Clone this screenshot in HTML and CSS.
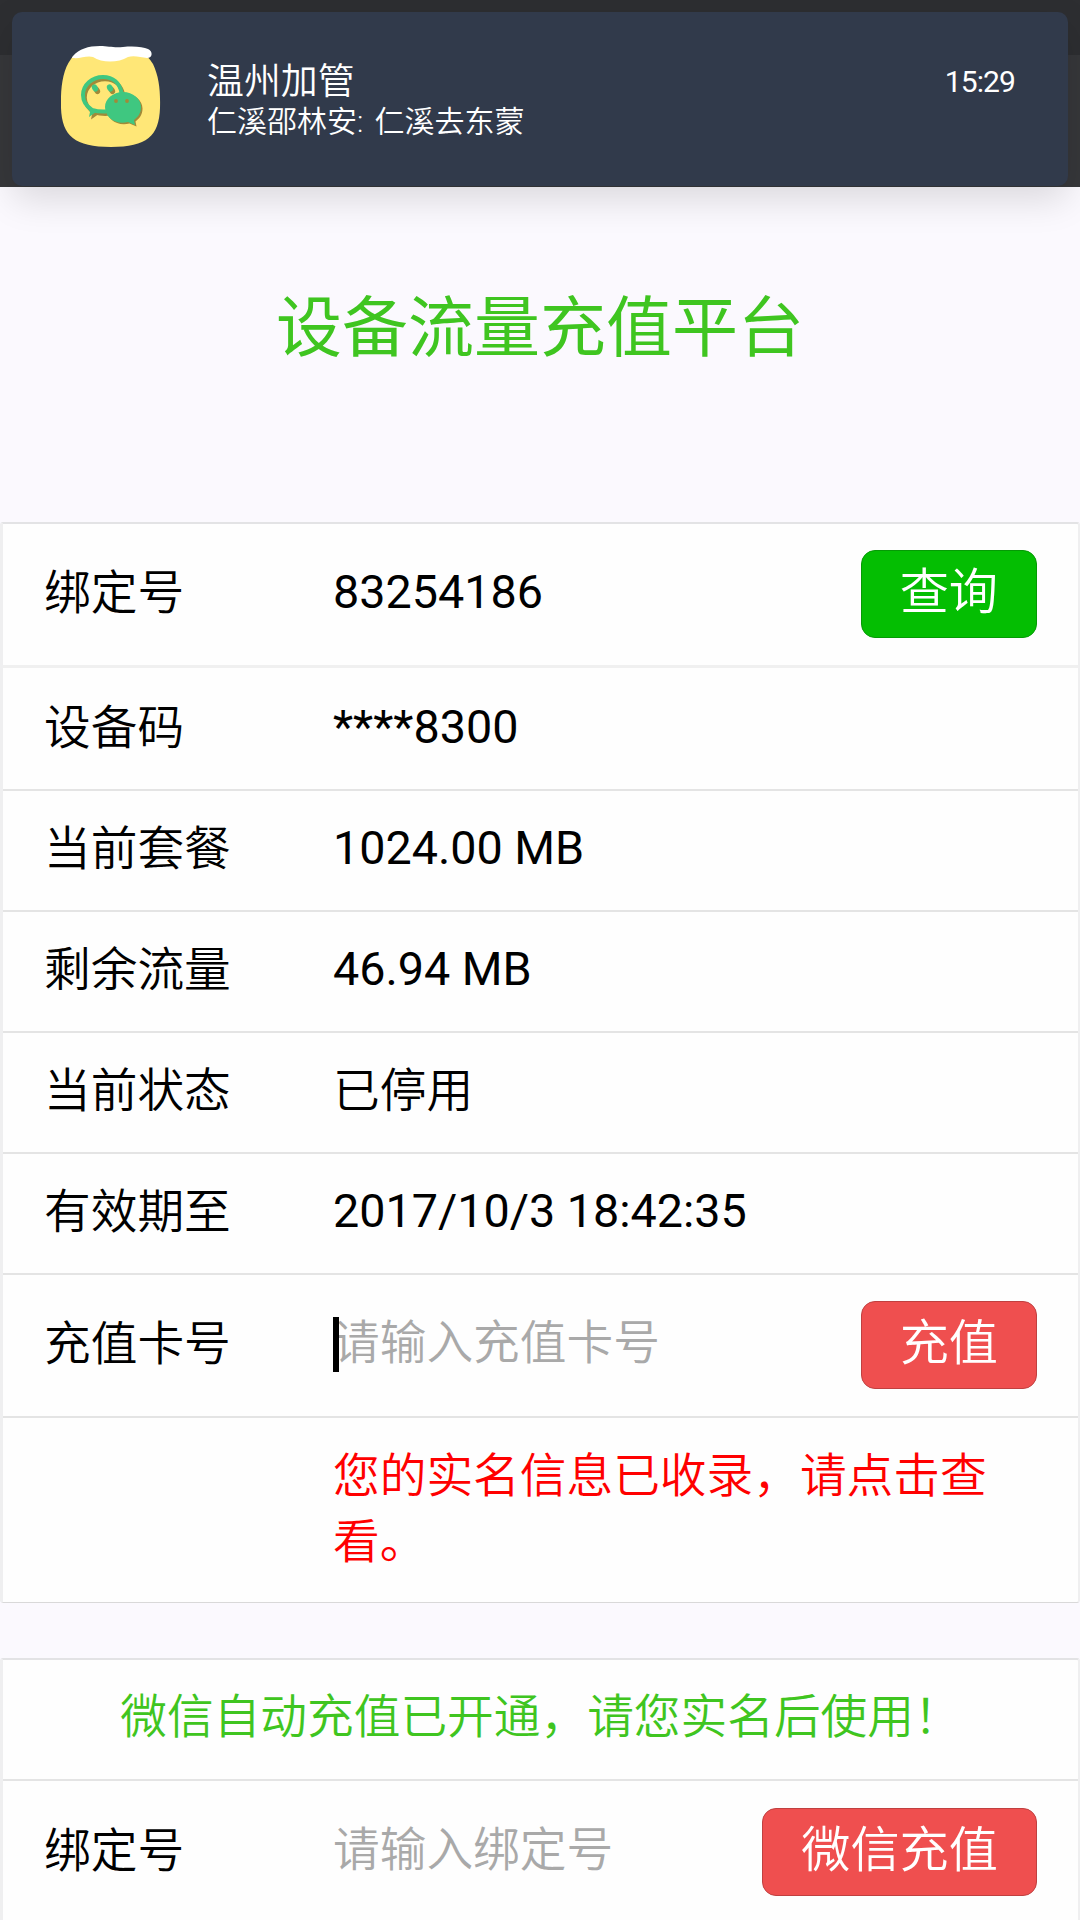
FILE: index.html
```html
<!DOCTYPE html>

<html lang="zh-CN">
<head>
    <meta charset="UTF-8">
    <meta name="viewport" content="width=device-width, initial-scale=1.0">
    <title>设备流量充值平台</title>
    <link rel="stylesheet" href="styles.css">
</head>
<body>
    <div class="topbar">
        <div class="statusbar"></div>
        <div class="notification">
            <svg class="app-icon" viewBox="0 0 100 102">
                <path fill="#ffe777" d="M50 4C80 4 86 8 92 18C98 31 99.500 44 99 62C98 90 86 101 50 101C14 101 1 90 0 62C-.500 44 1 25 10 13C14 7 22 4 50 4Z"/>
                <path fill="#fff" d="M12 10C18 3 27 0 39 0C48 0 52 2 62 1C74 0 82 1 87 3C92 5 92 12 86 12C80 11 72 9 67 11C57 17 41 17 32 11C26 9 19 13 12 12Q10 12 12 10Z"/>
                <g transform="translate(2 2.500)" fill="#a18a38">
                    <path fill="none" stroke="#a18a38" stroke-width="3.600" d="M45 65.500Q38 66 31 64C25 60 22 55 22 49C22 39 31 31 42 31C52 31 59 37 60.500 47"/>
                    <path d="M27 62L35 66L28 71L29 66Z"/>
                    <ellipse cx="34" cy="42" rx="2.800" ry="3.800" transform="rotate(-30 34 42)"/>
                    <ellipse cx="49" cy="42" rx="2.800" ry="3.800" transform="rotate(-30 49 42)"/>
                </g>
                <path transform="translate(1.500 1.500)" fill="#a18a38" d="M62 46C72 46 80 53 80 61C80 67 77 71 73 74L74 79L67 76C55 79 44 72 44 61C44 53 52 46 62 46Z"/>
                <g fill="#3fc780">
                    <path fill="none" stroke="#3fc780" stroke-width="4" d="M45 65.500Q38 66 31 64C25 60 22 55 22 49C22 39 31 31 42 31C52 31 59 37 60.500 47"/>
                    <path d="M27 62L35 66L28 71L29 66Z"/>
                    <ellipse cx="34" cy="42" rx="2.800" ry="3.800" transform="rotate(-30 34 42)"/>
                    <ellipse cx="49" cy="42" rx="2.800" ry="3.800" transform="rotate(-30 49 42)"/>
                    <path d="M62 46C72 46 80 53 80 61C80 67 77 71 73 74L74 79L67 76C55 79 44 72 44 61C44 53 52 46 62 46Z"/>
                </g>
                <circle cx="55" cy="55" r="1.900" fill="#a18a38"/>
                <circle cx="66" cy="55" r="1.900" fill="#a18a38"/>
            </svg>
            <div class="message">
                <div class="message-title">温州加管</div>
                <div class="message-text">仁溪邵林安: 仁溪去东蒙</div>
            </div>
            <div class="message-time">15:29</div>
        </div>
    </div>

    <h1 class="title">设备流量充值平台</h1>

    <div class="cells">
        <div class="cell tall first">
            <label class="label">绑定号</label>
            <input class="value" type="text" value="83254186">
            <button class="btn btn-green">查询</button>
        </div>
        <div class="cell code">
            <div class="label">设备码</div>
            <div class="value">****8300</div>
        </div>
        <div class="cell">
            <div class="label">当前套餐</div>
            <div class="value">1024.00 MB</div>
        </div>
        <div class="cell">
            <div class="label">剩余流量</div>
            <div class="value">46.94 MB</div>
        </div>
        <div class="cell">
            <div class="label">当前状态</div>
            <div class="value cn">已停用</div>
        </div>
        <div class="cell">
            <div class="label">有效期至</div>
            <div class="value">2017/10/3 18:42:35</div>
        </div>
        <div class="cell tall focus">
            <label class="label">充值卡号</label>
            <input class="value" type="text" placeholder="请输入充值卡号">
            <button class="btn btn-red">充值</button>
        </div>
        <div class="cell notice">
            <div class="label"></div>
            <div class="value cn warn">您的实名信息已收录，请点击查看。</div>
        </div>
    </div>

    <div class="cells">
        <div class="cell center">微信自动充值已开通，请您实名后使用！</div>
        <div class="cell tall">
            <label class="label">绑定号</label>
            <input class="value" type="text" placeholder="请输入绑定号">
            <button class="btn btn-red">微信充值</button>
        </div>
    </div>
</body>
</html>
```
FILE: styles.css
```css
* {
    box-sizing: border-box;
}
body {
    margin: 0;
    padding: 0;
    height: 1920px;
    overflow: hidden;
    background-color: #fbf9fe;
    font-family: Roboto, "Noto Sans CJK SC", sans-serif;
    font-size: 46.7px;
    line-height: 66px;
    color: #000;
}
.topbar {
    position: relative;
    height: 187px;
    padding: 12px 12px 0;
    background-color: #36373a;
}
.statusbar {
    position: absolute;
    top: 0;
    left: 0;
    width: 100%;
    height: 55px;
    background-color: #2d2e31;
}
.notification {
    position: relative;
    display: flex;
    height: 174px;
    padding: 34px 53px 0 49px;
    background-color: #313a4b;
    border-radius: 10px;
    box-shadow: 0 14px 36px rgba(0,0,0,0.13);
    color: #fff;
    font-weight: 350;
}
.app-icon {
    width: 100px;
    height: 102px;
}
.message {
    flex: 1;
    margin-left: 46px;
    padding-top: 15px;
}
.message-title {
    font-size: 36.9px;
    line-height: 42px;
}
.message-text {
    font-size: 30px;
    line-height: 38px;
    word-spacing: 4px;
}
.message-time {
    margin-top: 16px;
    font-size: 30px;
    font-weight: 400;
    line-height: 40px;
    letter-spacing: -0.9px;
}
.title {
    margin: 0;
    padding: 102px 0 154px;
    font-size: 66px;
    line-height: 79px;
    font-weight: 400;
    text-align: center;
    color: #3fc520;
}
.cells {
    margin-bottom: 55px;
    background-color: #fefefe;
    border-top: 2px solid #e3e3e5;
    border-bottom: 1px solid #d9d9d9;
    border-left: 3px solid #efeff0;
    border-right: 2px solid #efeff0;
    border-radius: 3px;
}
.cell {
    display: flex;
    align-items: center;
    height: 121px;
    padding: 0 41px 6px;
    border-bottom: 2px solid #e4e4e4;
}
.cell:last-child {
    border-bottom: none;
}
.tall {
    height: 143px;
}
.first {
    height: 144px;
    border-bottom: 3px solid #f0f0f0;
}
.code {
    height: 123px;
    padding-bottom: 4px;
}
.label {
    flex: none;
    width: 289px;
    margin-top: 2px;
    font-weight: 350;
}
.value {
    flex: 1;
    min-width: 0;
}
.cn {
    margin-top: 2px;
    font-weight: 350;
}
.warn {
    margin-top: 0;
    color: #f00;
}
input.value {
    height: 66px;
    padding: 0;
    border: none;
    outline: none;
    background: none;
    font: inherit;
    color: #000;
}
input.value::placeholder {
    color: #a9a9a9;
    font-weight: 350;
}
.btn {
    flex: none;
    height: 88px;
    margin-top: 4px;
    padding: 0 38px 4px;
    border: 1px solid #059a05;
    border-radius: 14px;
    background-color: #04be02;
    color: #fff;
    font-family: inherit;
    font-size: 49.2px;
    font-weight: 350;
    line-height: 78px;
}
.btn-red {
    border-color: #c04040;
    background-color: #ef4f4f;
}
.focus {
    position: relative;
}
/* text cursor */
.focus::after {
    content: "";
    position: absolute;
    left: 330px;
    top: 42px;
    width: 6px;
    height: 55px;
    background-color: #000;
}
.notice {
    height: 184px;
    align-items: flex-start;
    padding-top: 25px;
}
.center {
    justify-content: center;
    font-weight: 350;
    color: #3fc520;
}
```
